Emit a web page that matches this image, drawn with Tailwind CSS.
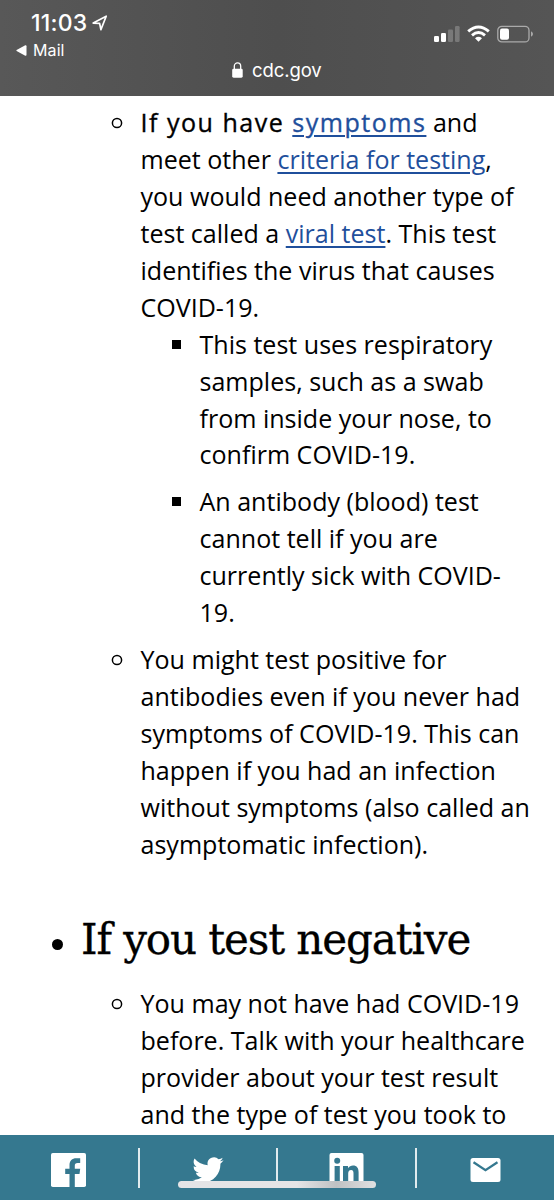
<!DOCTYPE html>
<html lang="en">
<head>
<meta charset="utf-8">
<meta name="viewport" content="width=device-width, initial-scale=1">
<title>cdc.gov</title>
<script src="https://cdn.jsdelivr.net/npm/@tailwindcss/browser@4"></script>
</head>
<body class="bg-white">
<div class="relative flex flex-col w-[554px] h-[1200px] overflow-hidden bg-white font-['Open_Sans',sans-serif] text-black">
  <header class="shrink-0 h-24 bg-linear-to-r from-[#585858] via-[#4e4e4e] to-[#555555] text-white font-['Inter',sans-serif]">
    <div class="flex justify-between h-[60px]">
      <div class="pl-4 pt-[11px]">
        <div class="flex items-center pl-[15px] h-6">
          <span class="text-[23px] leading-6 font-medium tracking-[0.2px] w-[57px] whitespace-nowrap">11:03</span>
          <svg class="ml-[4px] w-4 h-4" viewBox="0 0 16 16" fill="none" stroke="white" stroke-width="1.7" stroke-linejoin="round"><path d="M1.2 8.1 14.2 1.2 8.9 14.6 7.6 8.3Z"/></svg>
        </div>
        <div class="flex items-center h-5 mt-[5px] gap-[6px]">
          <svg class="w-[11px] h-[11px]" viewBox="0 0 11 11" fill="white"><path d="M.6 4.9Q0 5.5.6 6.1L9.3 10.7Q10.5 11 10.5 9.8V1.2Q10.5 0 9.3.3Z"/></svg>
          <span class="text-[16px] leading-5 tracking-[0.1px]">Mail</span>
        </div>
      </div>
      <div class="flex items-start pt-[25px] pr-[20px]">
        <svg class="w-[26px] h-[17px]" viewBox="0 0 26 17" fill="white"><rect x="0" y="11" width="5" height="6" rx="1.3"/><rect x="7" y="8" width="5" height="9" rx="1.3"/><g opacity=".22"><rect x="14" y="4.5" width="5" height="12.5" rx="1.3"/><rect x="21" y="1" width="4.6" height="16" rx="1.3"/></g></svg>
        <svg class="ml-[7px] w-[23px] h-[17px]" viewBox="0 0 23 17" fill="none" stroke="white" stroke-width="2.9"><path d="M1.2 6.4Q11.5-2.6 21.8 6.4"/><path d="M5 10.3Q11.5 4.7 18 10.3"/><path d="M8 13.2Q11.5 10.3 15 13.2L11.5 16.8Z" fill="white" stroke="none"/></svg>
        <svg class="ml-[7px] w-[37px] h-[18px]" viewBox="0 0 37 18"><rect x=".8" y="1.3" width="31.2" height="15.6" rx="4" fill="none" stroke="white" stroke-opacity=".5" stroke-width="1.3"/><rect x="3" y="3.5" width="9" height="11.3" rx="2" fill="white"/><path d="M34 6.3Q36 7.2 36 9T34 11.8Z" fill="white" opacity=".5"/></svg>
      </div>
    </div>
    <div class="flex items-center h-[20px] pl-[232px] gap-[9px]">
      <svg class="w-[11px] h-4" viewBox="0 0 11 16"><path d="M2.3 8V4.2a3.2 3.3 0 0 1 6.4 0V8" fill="none" stroke="white" stroke-width="1.3"/><rect x=".2" y="6.7" width="10.5" height="9" rx="1.4" fill="white"/></svg>
      <span class="text-[18.5px] leading-[20px] tracking-[-0.1px]">cdc.gov</span>
    </div>
  </header>

  <main class="grow overflow-hidden pt-[8px] text-[25.05px] leading-[36.93px] whitespace-nowrap">
    <div class="flex">
      <div class="w-[140.5px] shrink-0 pl-[111px] pt-[13px]"><svg class="size-[12px]" viewBox="0 0 12 12"><circle cx="6" cy="6" r="4.6" fill="none" stroke="black" stroke-width="1.5"/></svg></div>
      <div>
        <p><span class="font-medium tracking-[1.5px] [-webkit-text-stroke:0.35px]">If you have <a class="text-[#1f4f9c] underline decoration-2 underline-offset-[3px]">symptoms</a></span> and<br>meet other <a class="text-[#1f4f9c] underline decoration-[1.5px] underline-offset-[3px]">criteria for testing</a>,<br>you would need another type of<br>test called a <a class="text-[#1f4f9c] underline decoration-[1.5px] underline-offset-[3px]">viral test</a>. This test<br>identifies the virus that causes<br>COVID-19.</p>
        <div class="flex">
          <div class="w-[59px] shrink-0 pl-[31px] pt-[14px]"><div class="size-[9px] bg-black"></div></div>
          <p>This test uses respiratory<br>samples, such as a swab<br>from inside your nose, to<br>confirm COVID-19.</p>
        </div>
        <div class="flex mt-[10px]">
          <div class="w-[59px] shrink-0 pl-[31px] pt-[14px]"><div class="size-[9px] bg-black"></div></div>
          <p>An antibody (blood) test<br>cannot tell if you are<br>currently sick with COVID-<br>19.</p>
        </div>
      </div>
    </div>
    <div class="flex mt-[10px]">
      <div class="w-[140.5px] shrink-0 pl-[111px] pt-[13px]"><svg class="size-[12px]" viewBox="0 0 12 12"><circle cx="6" cy="6" r="4.6" fill="none" stroke="black" stroke-width="1.5"/></svg></div>
      <p>You might test positive for<br>antibodies even if you never had<br>symptoms of COVID-19. This can<br>happen if you had an infection<br>without symptoms (also called an<br>asymptomatic infection).</p>
    </div>
    <div class="flex h-[60px] mt-[47px]">
      <div class="w-[81px] shrink-0 pl-[52px] pt-[29px]"><div class="size-[11px] rounded-full bg-black"></div></div>
      <h2 class="font-['DejaVu_Serif',serif] text-[42px] leading-[59px] tracking-[-1.1px] [-webkit-text-stroke:0.3px]">If you test negative</h2>
    </div>
    <div class="flex mt-[15px]">
      <div class="w-[140.5px] shrink-0 pl-[111px] pt-[13px]"><svg class="size-[12px]" viewBox="0 0 12 12"><circle cx="6" cy="6" r="4.6" fill="none" stroke="black" stroke-width="1.5"/></svg></div>
      <p>You may not have had COVID-19<br>before. Talk with your healthcare<br>provider about your test result<br>and the type of test you took to</p>
    </div>
  </main>

  <footer class="shrink-0 h-[65px] bg-[#35788f] grid grid-cols-[139.5px_138.5px_139px_1fr] text-white">
    <div class="flex justify-between pl-[51px] pt-[13px]">
      <svg class="mt-[5px] w-[35px] h-[34px]" viewBox="0 0 35 34"><rect width="35" height="34" rx="1.8" fill="white"/><path d="M18.5 34V21H14.2V15.8H18.5V12.2C18.5 7.8 21.2 5.2 25.2 5.2H29.2V10H26.6C24.5 10 23.8 11 23.8 12.8V15.8H29.2L28.5 21H23.8V34Z" fill="#35788f"/></svg>
      <div class="w-[2px] h-10 bg-white/85"></div>
    </div>
    <div class="flex justify-between pl-[52px] pt-[13px]">
      <svg class="mt-[9px] w-8 h-[26px]" viewBox="0 2 24 20" fill="white"><path d="M23.95 4.57a10 10 0 0 1-2.82.77 4.96 4.96 0 0 0 2.16-2.72c-.95.56-2 .97-3.13 1.19a4.92 4.92 0 0 0-8.38 4.48A13.93 13.93 0 0 1 1.64 3.16a4.92 4.92 0 0 0 1.52 6.57 4.9 4.9 0 0 1-2.23-.61v.06a4.92 4.92 0 0 0 3.95 4.83 5 5 0 0 1-2.22.08 4.94 4.94 0 0 0 4.6 3.42A9.87 9.87 0 0 1 0 19.54a13.99 13.99 0 0 0 7.55 2.21c9.05 0 14-7.5 14-13.98 0-.21 0-.42-.02-.63a9.94 9.94 0 0 0 2.46-2.55Z"/></svg>
      <div class="w-[2px] h-10 bg-white/85"></div>
    </div>
    <div class="flex justify-between pl-[51px] pt-[13px]">
      <svg class="mt-[5px] w-[35px] h-[34px]" viewBox="0 0 35 34"><rect x=".5" width="34" height="34" rx="2" fill="white"/><g fill="#35788f"><circle cx="8.2" cy="7.8" r="3"/><path d="M5.6 13H10.8V29.5H5.6ZM14 13H19V15.3C20.2 13.4 22 12.6 24 12.6 28 12.6 29.6 15.3 29.6 19.5V29.5H24.5V20.6C24.5 18.4 24 17.1 22.1 17.1 20 17.1 19.2 18.6 19.2 20.8V29.5H14Z"/></g></svg>
      <div class="w-[2px] h-10 bg-white/85"></div>
    </div>
    <div class="pl-[53px] pt-[23px]">
      <svg class="w-[31px] h-[24px]" viewBox="0 0 31 24"><rect x=".5" width="30" height="24" rx="2.5" fill="white"/><path d="M3.5 4.3 15.5 12.2 27.5 4.3" fill="none" stroke="#35788f" stroke-width="2.3"/></svg>
    </div>
  </footer>
  <div class="absolute left-[178px] top-[1181px] w-[198px] h-[7px] rounded-full bg-linear-to-r from-[#e4e4e6] from-60% via-[#bfc1c3] via-80% to-[#e0e1e2]"></div>
</div>
</body>
</html>
